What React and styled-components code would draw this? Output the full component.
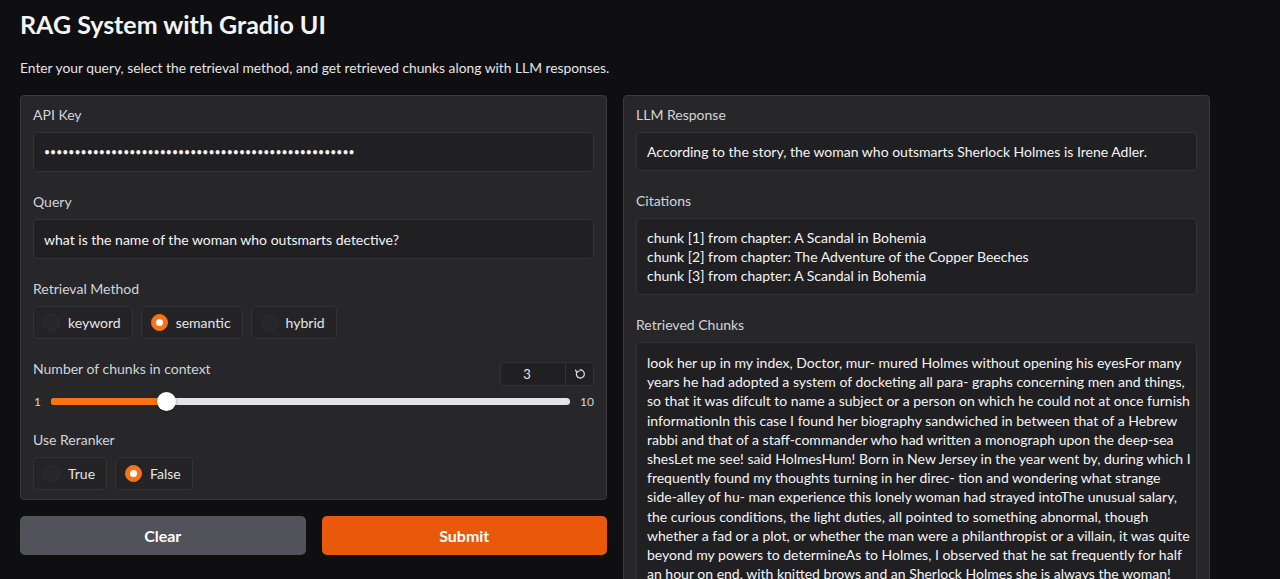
import styled, { createGlobalStyle } from 'styled-components';

const GlobalStyle = createGlobalStyle`
  html, body {
    margin: 0;
    padding: 0;
    background: #0f0f11;
    color: #e4e4e7;
    font-family: Lato, "Liberation Sans", sans-serif;
  }
  * { box-sizing: border-box; }
`;

const Page = styled.div`
  padding: 9px 70px 0 20px;
  height: 579px;
  overflow: hidden;
`;

const Title = styled.h1`
  margin: 0;
  font-size: 25px;
  font-weight: 700;
  line-height: 30px;
  color: #f4f4f5;
`;

const Subtitle = styled.p`
  margin: 20px 0 18px;
  font-size: 13.8px;
  line-height: 18px;
  color: #e4e4e7;
`;

const Columns = styled.div`
  display: flex;
  gap: 16px;
  align-items: flex-start;
`;

const Column = styled.div`
  width: 587px;
  display: flex;
  flex-direction: column;
  gap: 16px;
`;

const Panel = styled.div`
  background: #27272a;
  border: 1px solid #3a3a3e;
  border-radius: 4px;
  padding: 10px 12px 9px;
  display: flex;
  flex-direction: column;
  gap: 21px;
`;

const Field = styled.div`
  display: flex;
  flex-direction: column;
  gap: 8px;
`;

const Label = styled.div`
  font-size: 14px;
  line-height: 18px;
  color: #d4d4d8;
`;

const TextBox = styled.input`
  height: 40px;
  width: 100%;
  background: #202023;
  border: 1px solid #333337;
  border-radius: 4px;
  padding: 0 10px;
  font-family: inherit;
  font-size: ${(p) => (p.type === 'password' ? '10.5px' : '14px')};
  color: #f4f4f5;
  outline: none;
`;

const Output = styled.div`
  background: #202023;
  border: 1px solid #333337;
  border-radius: 4px;
  padding: ${(p) => (p.$long ? '10px' : '9px 10px')};
  font-size: 14px;
  line-height: ${(p) => (p.$long ? '19.2px' : '19px')};
  color: #f4f4f5;
  white-space: pre;
  overflow: hidden;
`;

const RadioRow = styled.div`
  display: flex;
  gap: 8px;
`;

const RadioItem = styled.label`
  display: flex;
  align-items: center;
  gap: 8px;
  height: 33px;
  padding: 0 11px 0 9px;
  border: 1px solid #333337;
  border-radius: 4px;
  background: #242427;
  font-size: 14px;
  color: #e4e4e7;
`;

const RadioDot = styled.span`
  width: 17px;
  height: 17px;
  border-radius: 50%;
  background: ${(p) => (p.$on ? '#f97316' : '#27272a')};
  border: 1px solid ${(p) => (p.$on ? '#f97316' : '#2f2f33')};
  display: flex;
  align-items: center;
  justify-content: center;
  &::after {
    content: '';
    display: ${(p) => (p.$on ? 'block' : 'none')};
    width: 7px;
    height: 7px;
    border-radius: 50%;
    background: #fff;
  }
`;

const SliderHead = styled.div`
  display: flex;
  justify-content: space-between;
  align-items: flex-start;
`;

const NumberBox = styled.div`
  display: flex;
  height: 24px;
  margin-top: 2px;
  border: 1px solid #333337;
  border-radius: 4px;
  background: #202023;
  font-size: 13px;
  color: #e4e4e7;
`;

const NumberValue = styled.div`
  width: 65px;
  display: flex;
  align-items: center;
  justify-content: center;
  padding-right: 12px;
  border-right: 1px solid #333337;
`;

const ResetBtn = styled.div`
  width: 27px;
  display: flex;
  align-items: center;
  justify-content: center;
  color: #d4d4d8;
`;

const SliderRow = styled.div`
  display: flex;
  align-items: center;
  gap: 10px;
  height: 18px;
  margin-top: -2px;
  padding-left: 1px;
  font-size: 12px;
  color: #d4d4d8;
`;

const Track = styled.div`
  position: relative;
  flex: 1;
  height: 7px;
  border-radius: 4px;
  background: #e4e4e7;
`;

const Fill = styled.div`
  height: 100%;
  border-radius: 4px;
  background: #f97316;
`;

const Thumb = styled.div`
  position: absolute;
  top: 50%;
  width: 19px;
  height: 19px;
  margin-left: -9px;
  margin-top: -9.5px;
  border-radius: 50%;
  background: #fff;
  box-shadow: 0 1px 3px rgba(0, 0, 0, 0.4);
`;

const ButtonRow = styled.div`
  display: flex;
  gap: 16px;
`;

const Button = styled.button`
  flex: 1;
  height: 39px;
  border: none;
  border-radius: 5px;
  background: ${(p) => (p.$primary ? '#ea580c' : '#52525b')};
  color: #fff;
  font-family: inherit;
  font-size: 16px;
  font-weight: 700;
`;

const chunks = [
  'look her up in my index, Doctor, mur- mured Holmes without opening his eyesFor many',
  'years he had adopted a system of docketing all para- graphs concerning men and things,',
  'so that it was difcult to name a subject or a person on which he could not at once furnish',
  'informationIn this case I found her biography sandwiched in between that of a Hebrew',
  'rabbi and that of a staff-commander who had written a monograph upon the deep-sea',
  'shesLet me see! said HolmesHum! Born in New Jersey in the year went by, during which I',
  'frequently found my thoughts turning in her direc- tion and wondering what strange',
  'side-alley of hu- man experience this lonely woman had strayed intoThe unusual salary,',
  'the curious conditions, the light duties, all pointed to something abnormal, though',
  'whether a fad or a plot, or whether the man were a philanthropist or a villain, it was quite',
  'beyond my powers to determineAs to Holmes, I observed that he sat frequently for half',
  'an hour on end, with knitted brows and an Sherlock Holmes she is always the woman!',
].join('\n');

const citations = [
  'chunk [1] from chapter: A Scandal in Bohemia',
  'chunk [2] from chapter: The Adventure of the Copper Beeches',
  'chunk [3] from chapter: A Scandal in Bohemia',
].join('\n');

const Radio = ({ label, on }) => (
  <RadioItem>
    <RadioDot $on={on} />
    {label}
  </RadioItem>
);

const App = () => {
  const value = 3;
  const pct = ((value - 1) / 9) * 100;

  return (
    <Page>
      <GlobalStyle />
      <Title>RAG System with Gradio UI</Title>
      <Subtitle>
        Enter your query, select the retrieval method, and get retrieved chunks along with LLM responses.
      </Subtitle>
      <Columns>
        <Column>
          <Panel>
            <Field>
              <Label>API Key</Label>
              <TextBox type="password" readOnly value={'x'.repeat(51)} />
            </Field>
            <Field>
              <Label>Query</Label>
              <TextBox readOnly value="what is the name of the woman who outsmarts detective?" />
            </Field>
            <Field>
              <Label>Retrieval Method</Label>
              <RadioRow>
                <Radio label="keyword" />
                <Radio label="semantic" on />
                <Radio label="hybrid" />
              </RadioRow>
            </Field>
            <Field>
              <SliderHead>
                <Label>Number of chunks in context</Label>
                <NumberBox>
                  <NumberValue>{value}</NumberValue>
                  <ResetBtn>
                    <svg width="12" height="12" viewBox="0 0 24 24" fill="none" stroke="currentColor" strokeWidth="2.6" strokeLinecap="round" strokeLinejoin="round">
                      <path d="M5.5 8.5A8 8 0 1 0 12 4" />
                      <path d="M3 4.5 6 8.5 10 6" />
                    </svg>
                  </ResetBtn>
                </NumberBox>
              </SliderHead>
              <SliderRow>
                <span>1</span>
                <Track>
                  <Fill style={{ width: `${pct}%` }} />
                  <Thumb style={{ left: `${pct}%` }} />
                </Track>
                <span>10</span>
              </SliderRow>
            </Field>
            <Field>
              <Label>Use Reranker</Label>
              <RadioRow>
                <Radio label="True" />
                <Radio label="False" on />
              </RadioRow>
            </Field>
          </Panel>
          <ButtonRow>
            <Button>Clear</Button>
            <Button $primary>Submit</Button>
          </ButtonRow>
        </Column>
        <Column>
          <Panel>
            <Field>
              <Label>LLM Response</Label>
              <Output>
                According to the story, the woman who outsmarts Sherlock Holmes is Irene Adler.
              </Output>
            </Field>
            <Field>
              <Label>Citations</Label>
              <Output>{citations}</Output>
            </Field>
            <Field>
              <Label>Retrieved Chunks</Label>
              <Output $long>{chunks}</Output>
            </Field>
          </Panel>
        </Column>
      </Columns>
    </Page>
  );
};

export default App;
